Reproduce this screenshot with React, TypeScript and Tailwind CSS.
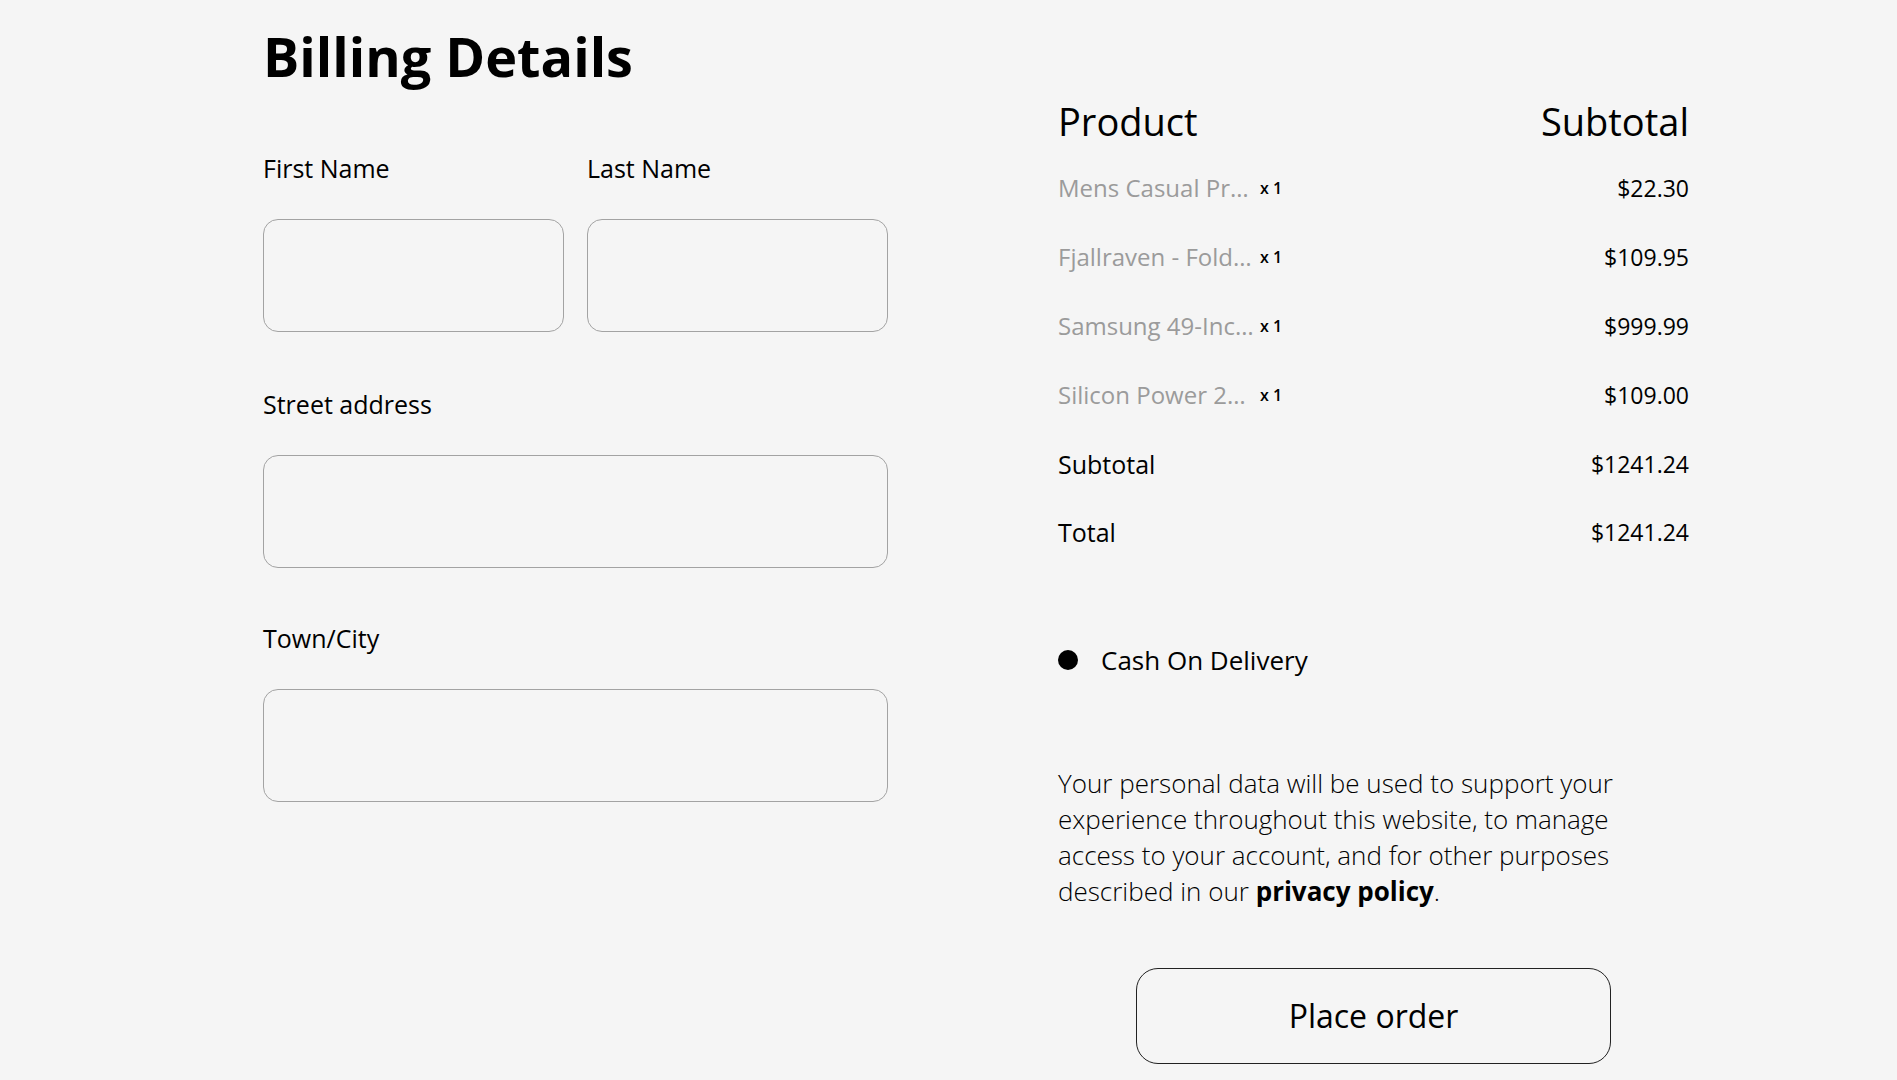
import React from 'react';

const items = [
  { name: 'Mens Casual Premium Slim Fit T-Shirts', qty: 1, price: '$22.30' },
  { name: 'Fjallraven - Foldsack No. 1 Backpack', qty: 1, price: '$109.95' },
  { name: 'Samsung 49-Inch CHG90 144Hz Curved Gaming Monitor', qty: 1, price: '$999.99' },
  { name: 'Silicon Power 256GB SSD 3D NAND A55', qty: 1, price: '$109.00' },
];

const Field = ({ label, className = '' }: { label: string; className?: string }) => (
  <div className={className}>
    <label className="block text-[25px] leading-[30px] font-medium text-black">{label}</label>
    <input
      type="text"
      className="mt-[36px] block w-full h-[113px] rounded-[15px] border border-[#a3a3a3] bg-transparent px-4 outline-none"
    />
  </div>
);

const App = () => {
  return (
    <div className="min-h-screen bg-[#f5f5f5] font-['Open_Sans',sans-serif] text-black">
      <div className="flex pl-[263px]">
        {/* Billing form */}
        <div className="w-[625px] pt-[21px]">
          <h1 className="text-[54px] leading-[70px] font-bold">Billing Details</h1>

          <div className="mt-[62px] grid grid-cols-2 gap-[23px]">
            <Field label="First Name" />
            <Field label="Last Name" />
          </div>
          <Field label="Street address" className="mt-[57px]" />
          <Field label="Town/City" className="mt-[55px]" />
        </div>

        {/* Order summary */}
        <div className="ml-[170px] w-[631px] pt-[99px]">
          <div className="flex justify-between text-[38px] leading-[44px] font-medium">
            <span>Product</span>
            <span>Subtotal</span>
          </div>

          <div className="mt-[30px] flex flex-col gap-[39px] text-[25px] leading-[30px]">
            {items.map(item => (
              <div key={item.name} className="flex items-center justify-between">
                <div className="flex items-center">
                  <span className="w-[197px] truncate text-[24px] text-[#9b9b9b]">{item.name}</span>
                  <span className="ml-[5px] text-[16px] font-semibold">x {item.qty}</span>
                </div>
                <span className="text-[23px]">{item.price}</span>
              </div>
            ))}
            <div className="flex justify-between">
              <span>Subtotal</span>
              <span className="text-[23px]">$1241.24</span>
            </div>
            <div className="-mt-[1px] flex justify-between">
              <span>Total</span>
              <span className="text-[23px]">$1241.24</span>
            </div>
          </div>

          <div className="mt-[98px] flex items-center text-[26px] leading-[30px]">
            <span className="h-[20px] w-[20px] rounded-full bg-black" />
            <span className="ml-[23px]">Cash On Delivery</span>
          </div>

          <p className="mt-[90px] text-[26px] leading-[36px] font-light">
            Your personal data will be used to support your experience throughout this website, to manage
            access to your account, and for other purposes described in our{' '}
            <b className="font-bold">privacy policy</b>.
          </p>

          <div className="mt-[59px] flex justify-center">
            <button className="h-[96px] w-[475px] rounded-[22px] border border-[#222] text-[32px]">
              Place order
            </button>
          </div>
        </div>
      </div>
    </div>
  );
};

export default App;
